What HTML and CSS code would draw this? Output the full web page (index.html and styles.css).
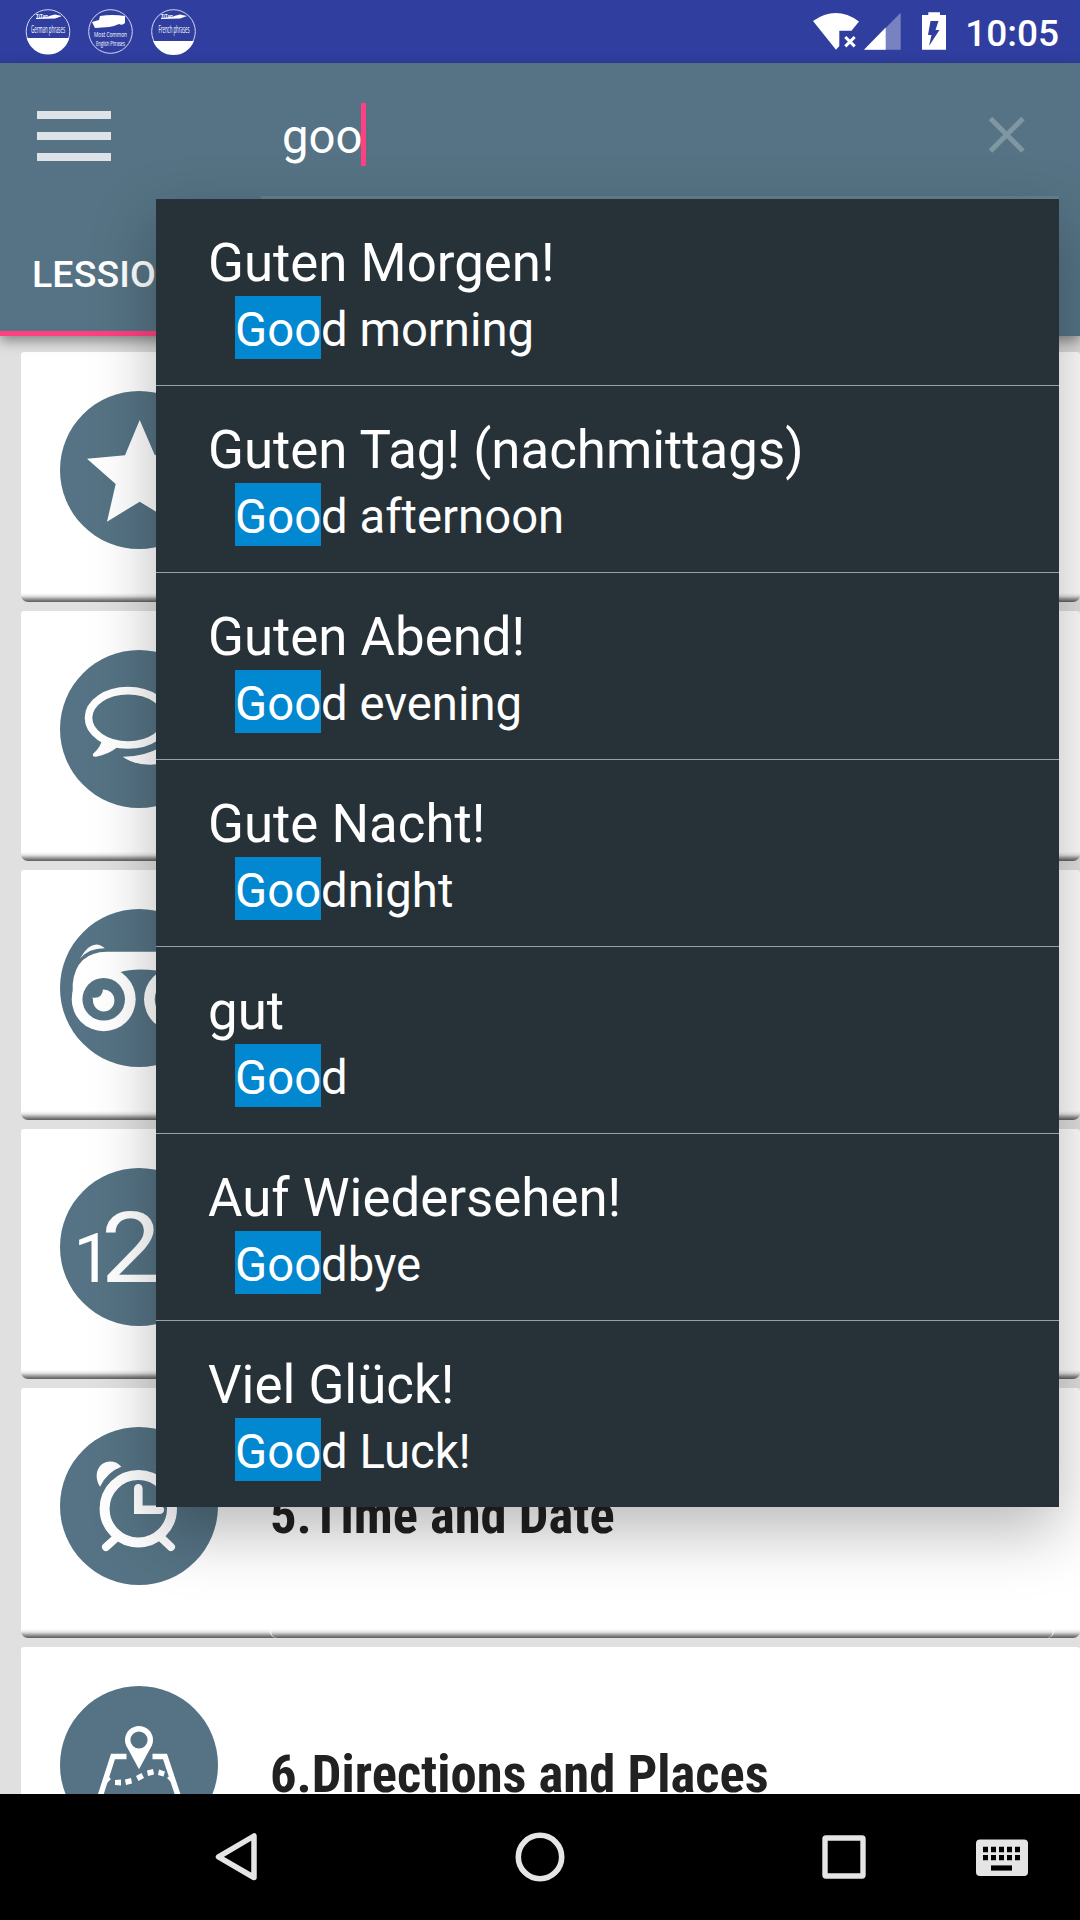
FILE: index.html
```
<!DOCTYPE html>
<html lang="en">
<head>
    <meta charset="UTF-8">
    <meta name="viewport" content="width=device-width, initial-scale=1.0">
    <title>German phrases</title>
    <link rel="stylesheet" href="styles.css">
</head>
<body>
    <div class="screen">
        <div class="status-bar">
            <svg class="notifications" width="200" height="63" viewBox="0 0 200 63">
                <g fill="none" stroke="#d5d8ef" stroke-width="1">
                    <circle cx="48" cy="31.5" r="21.8"/>
                    <circle cx="110.5" cy="31.5" r="21.8"/>
                    <circle cx="173.5" cy="31.5" r="21.8"/>
                </g>
                <g fill="#fff">
                    <path d="M26.7 38 H69.3 A22 22 0 0 1 26.7 38 Z"/>
                    <path d="M153 41 H194 A22 22 0 0 1 153 41 Z"/>
                    <path d="M49 16 L55 14.5 L62 16 L55 18.5 L36 19 V18 L48 17 Z"/>
                    <path d="M174 16 L180 14.5 L187 16 L180 18.5 L161 19 V18 L173 17 Z"/>
                    <path d="M100 16 Q112 14 125 16 V23 Q122 26 119 24 L114 26 L109 27 L95 28 L92 22 L99 20 Z"/>
                </g>
                <g class="badge-text">
                    <text x="36" y="18" textLength="12" lengthAdjust="spacingAndGlyphs" font-size="5" font-weight="700">TiTan</text>
                    <text x="31" y="33" textLength="34" lengthAdjust="spacingAndGlyphs" font-size="10">German phrases</text>
                    <text x="94" y="36.5" textLength="33" lengthAdjust="spacingAndGlyphs" font-size="7">Most Common</text>
                    <text x="96" y="45.5" textLength="29" lengthAdjust="spacingAndGlyphs" font-size="7">English Phrases</text>
                    <text x="161" y="18" textLength="12" lengthAdjust="spacingAndGlyphs" font-size="5" font-weight="700">TiTan</text>
                    <text x="158.5" y="33" textLength="31" lengthAdjust="spacingAndGlyphs" font-size="10">French phrases</text>
                </g>
            </svg>
            <svg class="signals" width="140" height="63" viewBox="810 0 140 63" fill="#fff">
                <path d="M813 21 Q836 5 859 21.5 L851.5 30.7 H839.3 V46 L836 49.7 Z"/>
                <path d="M845.3 37 L854.7 46.4 M854.7 37 L845.3 46.4" stroke="#fff" stroke-width="3"/>
                <path d="M864 49.7 L900.7 12.7 V49.7 Z" opacity=".35"/>
                <path d="M864 49.7 L885.7 27.5 V49.7 Z"/>
                <path d="M922 15 H928.3 V12.3 H940 V15 H946 V49.7 H922 Z"/>
                <path d="M930.5 21 H938.5 L935.5 30 H939.5 L929 46 L931.5 35 H928 Z" fill="#303f9f"/>
            </svg>
            <span class="clock">10:05</span>
        </div>

        <div class="app-bar">
            <div class="toolbar">
                <div class="menu-btn"><i></i><i></i><i></i></div>
                <div class="search">
                    <span class="query">goo</span><span class="caret"></span>
                    <svg class="clear-btn" width="38" height="38" viewBox="0 0 38 38">
                        <path d="M2.5 2.5 L35 35 M35 2.5 L2.5 35" stroke="#fff" stroke-opacity=".25" stroke-width="5" fill="none"/>
                    </svg>
                </div>
            </div>
            <div class="tabs">
                <div class="tab">LESSIONS</div>
            </div>
        </div>

        <div class="lessons">
            <div class="card">
                <svg class="card-icon" viewBox="0 0 158 158">
                    <path d="M79.7 29 L94.7 64 L132.4 67.7 L103.7 93 L112.4 130.7 L79.7 110.7 L47 130.7 L55.7 93 L27 67.7 L65 64.3 Z" fill="#fff"/>
                </svg>
                <div class="card-body"></div>
            </div>
            <div class="card">
                <svg class="card-icon" viewBox="0 0 158 158">
                    <ellipse cx="68" cy="67.8" rx="39.5" ry="27.2" fill="none" stroke="#fff" stroke-width="7.6"/>
                    <path d="M42 89 Q41 97 33 104 Q32 107 36 106.7 Q48 104.5 57 97.5 L55 90 L49.5 93 L51 88 Z" fill="#fff"/>
                    <path d="M62.7 106.7 Q84 107 103 96 L125 95 Q112 115 90 114.7 Q73 114.5 62.7 106.7 Z" fill="#fff"/>
                </svg>
                <div class="card-body"></div>
            </div>
            <div class="card">
                <svg class="card-icon" viewBox="0 0 158 158">
                    <path d="M12.7 90 V75 Q16 43 47 42.7 H112 Q143 43 146 75 V90 H116 V65 Q79 57 60 63.3 L44 90 Z" fill="#fff"/>
                    <circle cx="43.7" cy="90.3" r="32" fill="#fff"/>
                    <circle cx="116" cy="90.3" r="32" fill="#fff"/>
                    <circle cx="43.7" cy="90.3" r="21.3" fill="#557384"/>
                    <circle cx="116" cy="90.3" r="21.3" fill="#557384"/>
                    <path d="M43 80.5 A10.7 11 0 1 1 33 91 L32.5 88.5 Q42 90 43 80.5 Z" fill="#fff"/>
                    <path d="M20 49.5 Q32 28 45 39.3 Q29 39 20 49.5 Z" fill="#fff"/>
                </svg>
                <div class="card-body"></div>
            </div>
            <div class="card">
                <svg class="card-icon digits" viewBox="0 0 158 158">
                    <text x="13.5" y="113.7" font-size="68">1</text>
                    <text x="41" y="113.7" font-size="98" textLength="60" lengthAdjust="spacingAndGlyphs">2</text>
                </svg>
                <div class="card-body"></div>
            </div>
            <div class="card">
                <svg class="card-icon" viewBox="0 0 158 158">
                    <g fill="none" stroke="#fff">
                        <circle cx="78.3" cy="81.7" r="33.7" stroke-width="10"/>
                        <path d="M78.3 61.3 V82.8 H99.8" stroke-width="8.6" stroke-linecap="round"/>
                        <path d="M56 111 L46 120 M101.5 111 L111 120" stroke-width="8" stroke-linecap="round"/>
                    </g>
                    <path d="M40 59.7 C32 46 40 34.5 50 34.5 Q57 34.5 61.3 39.7 Q47 45 40 59.7 Z" fill="#fff"/>
                    <path d="M117 59.7 C125 46 117 34.5 107 34.5 Q100 34.5 95.5 39.7 Q110 45 117 59.7 Z" fill="#fff"/>
                </svg>
                <div class="card-body"><span class="lesson-title">5.Time and Date</span></div>
            </div>
            <div class="card">
                <svg class="card-icon" viewBox="0 0 158 158">
                    <path d="M79 83.3 L67.5 62 A14 14 0 1 1 90.5 62 Z" fill="#fff"/>
                    <circle cx="79" cy="54" r="8.6" fill="#557384"/>
                    <path d="M66.5 70.5 H53 L37 120 M92.5 70.5 H105 L121.5 120" fill="none" stroke="#fff" stroke-width="5.5"/>
                    <g fill="#fff">
                        <path d="M47 89 L51 93 L46 98 Z M107 92 L112 88 L113 98 Z"/>
                        <path d="M55 94 L61 93.5 V99.5 L55 99 Z"/>
                        <path d="M65 93.5 L71 92 L72 97.5 L66 99 Z"/>
                        <path d="M76 90 L81.5 87 L84 92 L78.5 95 Z"/>
                        <path d="M87 84.5 L93 83 L94 88.5 L88 90 Z"/>
                        <path d="M99 83.5 L105 85.5 L103.5 90.5 L98 89 Z"/>
                    </g>
                </svg>
                <div class="card-body"><span class="lesson-title">6.Directions and Places</span></div>
            </div>
        </div>

        <div class="nav-bar">
            <svg width="1080" height="126" viewBox="0 1794 1080 126" fill="none" stroke="#e5e5e5">
                <path d="M254 1836 V1877.5 L218.5 1856.8 Z" stroke-width="5.5" stroke-linejoin="round"/>
                <circle cx="540" cy="1857" r="21.7" stroke-width="5.6"/>
                <rect x="825" y="1838" width="38" height="38" stroke-width="5.4" rx="1"/>
                <rect x="976" y="1839.5" width="52" height="36.5" rx="4" fill="#e5e5e5" stroke="none"/>
                <path d="M983 1849.5 H1020 M983 1857.7 H1020" stroke="#000" stroke-width="5.3" stroke-dasharray="5 3"/>
                <path d="M991 1868 H1012" stroke="#000" stroke-width="5.2"/>
            </svg>
        </div>

        <ul class="suggestions">
            <li><p class="phrase">Guten Morgen!</p><p class="translation"><mark>Goo</mark>d morning</p></li>
            <li><p class="phrase">Guten Tag! (nachmittags)</p><p class="translation"><mark>Goo</mark>d afternoon</p></li>
            <li><p class="phrase">Guten Abend!</p><p class="translation"><mark>Goo</mark>d evening</p></li>
            <li><p class="phrase">Gute Nacht!</p><p class="translation"><mark>Goo</mark>dnight</p></li>
            <li><p class="phrase">gut</p><p class="translation"><mark>Goo</mark>d</p></li>
            <li><p class="phrase">Auf Wiedersehen!</p><p class="translation"><mark>Goo</mark>dbye</p></li>
            <li><p class="phrase">Viel Glück!</p><p class="translation"><mark>Goo</mark>d Luck!</p></li>
        </ul>
    </div>
</body>
</html>
```
FILE: styles.css
```
* {
    box-sizing: border-box;
    margin: 0;
    padding: 0;
}
body {
    font-family: Roboto, sans-serif;
    color: #fff;
}
svg {
    display: block;
}
.screen {
    position: relative;
    display: flex;
    flex-direction: column;
    width: 1080px;
    height: 1920px;
    overflow: hidden;
    background-color: #e0e0e0;
}

/* Status bar */
.status-bar {
    display: flex;
    flex: none;
    height: 63px;
    padding-right: 21px;
    background-color: #303f9f;
}
.badge-text {
    fill: #fff;
    font-family: "Open Sans", sans-serif;
}
.signals {
    margin-left: auto;
}
.clock {
    width: 109px;
    text-align: right;
    font-size: 37px;
    font-weight: 500;
    line-height: 67px;
}

/* App bar */
.app-bar {
    flex: none;
    height: 273px;
    background-color: #557384;
    box-shadow: 0 5px 12px rgba(0, 0, 0, 0.4);
    z-index: 1;
}
.toolbar {
    display: flex;
    height: 147px;
    padding: 0 21px 0 37px;
}
.menu-btn {
    display: flex;
    flex-direction: column;
    gap: 13px;
    width: 224px;
    padding-top: 48px;
}
.menu-btn i {
    width: 74px;
    height: 8px;
    background-color: #dde3e6;
}
.search {
    display: flex;
    flex: 1;
    height: 136px;
    padding: 40px 33px 0 21px;
    border-bottom: 3px solid #657f8e;
}
.query {
    width: 79px;
    font-size: 47.25px;
    line-height: 68px;
}
.caret {
    width: 5px;
    height: 63px;
    background-color: #ff4081;
}
.clear-btn {
    margin: 12.5px 0 0 auto;
}
.tabs {
    display: flex;
    height: 126px;
}
.tab {
    height: 126px;
    padding: 0 32px;
    border-bottom: 5px solid #ff4081;
    font-size: 37.5px;
    font-weight: 500;
    line-height: 129px;
    letter-spacing: 0.1px;
}

/* Lessons list */
.lessons {
    display: flex;
    flex: 1;
    flex-direction: column;
    gap: 9px;
    min-height: 0;
    padding: 16px 0 0 21px;
    overflow: hidden;
}
.card {
    display: flex;
    flex: none;
    height: 250px;
    padding: 0 26px 0 39px;
    border-radius: 3px 3px 0 0;
    background-color: #fff;
}
.card, .card-body {
    border-bottom-left-radius: 7px;
    border-bottom-right-radius: 7px;
    background-image: linear-gradient(to top, #5c5c5c, #828282 2px, #b4b4b4 4px, #e6e6e6 6px, #fff 9px);
}
.card-icon {
    flex: none;
    width: 158px;
    height: 158px;
    margin-top: 39px;
    border-radius: 50%;
    background-color: #557384;
}
.digits {
    fill: #fff;
    font-weight: 400;
}
.card-body {
    display: flex;
    flex: 1;
    align-items: center;
    margin-left: 52px;
    padding-top: 3px;
    border: solid #fff;
    border-width: 0 1px;
}
/* condensed bold face */
.lesson-title {
    margin-left: -1px;
    color: #212121;
    font-size: 52.6px;
    font-weight: 700;
    font-stretch: 75%;
    white-space: nowrap;
}

/* Navigation bar */
.nav-bar {
    flex: none;
    height: 126px;
    background-color: #000;
    z-index: 1;
}

/* Search suggestions, over the list */
.suggestions {
    position: absolute;
    top: 199px;
    left: 156px;
    z-index: 2;
    width: 903px;
    list-style: none;
    background-color: #263238;
    box-shadow: 0 24px 60px rgba(0, 0, 0, 0.28);
}
.suggestions li {
    height: 187px;
    padding: 31px 52px 0;
    border-bottom: 1px solid #90a4ae;
}
.suggestions li:last-child {
    height: 186px;
    border-bottom: none;
}
.phrase {
    height: 66px;
    font-size: 52.8px;
    line-height: 66px;
}
.translation {
    display: flex;
    height: 63px;
    padding-left: 27px;
    font-size: 47.25px;
    line-height: 68px;
    white-space: pre;
}
.translation mark {
    height: 63px;
    color: #fff;
    background-color: #0288d1;
}
```
